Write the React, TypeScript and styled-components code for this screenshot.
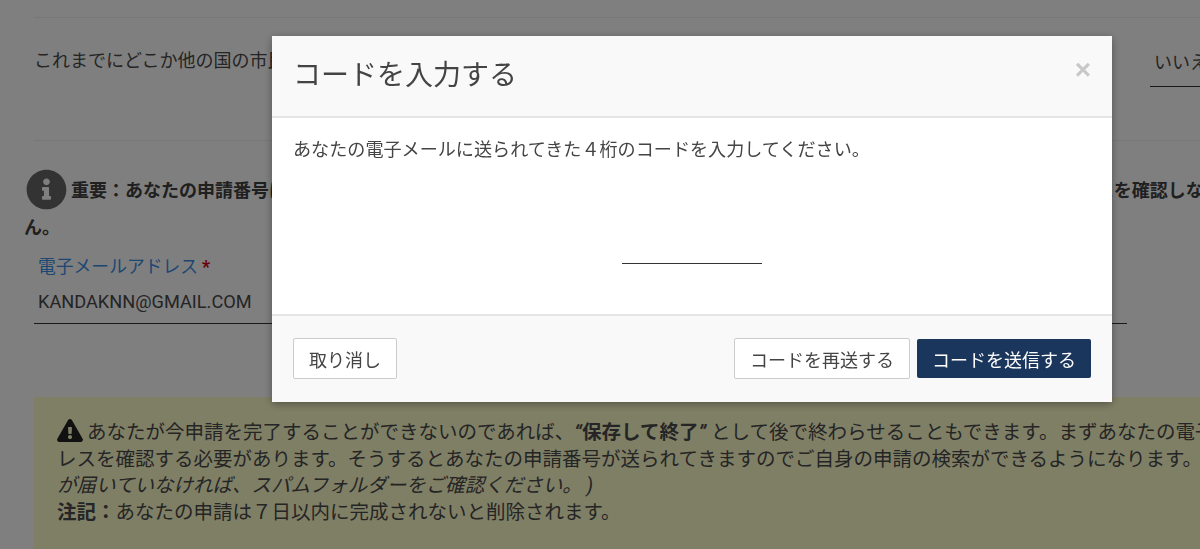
import { createGlobalStyle } from 'styled-components'
import styled from 'styled-components'
import { FaInfoCircle, FaExclamationTriangle } from 'react-icons/fa'

const GlobalStyle = createGlobalStyle`
html, body {
    margin: 0;
    height: 100%;
    overflow: hidden;
    background: #fff;
    font-family: Roboto, "Noto Sans CJK JP", sans-serif;
    color: #4a4a4a;
}
`;

const Page = styled.div`
width: 1500px;
height: 549px;
padding: 17px 0 0 34px;
box-sizing: border-box;
overflow: hidden;
`;

const Divider = styled.hr`
width: 1400px;
height: 1px;
margin: 0;
border: 0;
background: #eee;
`;

const QuestionRow = styled.div`
display: flex;
justify-content: space-between;
width: 1400px;
height: 122px;
box-sizing: border-box;
padding-top: 31px;
font-size: 18px;
line-height: 24px;
`;

const Select = styled.div`
width: 284px;
height: 38px;
box-sizing: border-box;
padding: 2px 0 0 4px;
border-bottom: 1px solid #333;
`;

const Question = styled.div``;

const Notice = styled.div`
width: 1500px;
margin: 28px 0 0 -10px;
font-size: 18px;
font-weight: 700;
line-height: 35px;
white-space: nowrap;
color: #404040;
`;

const InfoIcon = styled(FaInfoCircle)`
width: 41px;
height: 41px;
margin: 0 4px 0 2px;
vertical-align: -13px;
color: #666;
`;

const Field = styled.div`
width: 1093px;
margin-top: 9px;
border-bottom: 1px solid #333;
padding: 0 4px 9px;
box-sizing: border-box;
`;

const Label = styled.div`
font-size: 17.8px;
line-height: 26px;
color: #3a8ee6;
`;

const Required = styled.span`
color: #d0021b;
font-weight: 700;
margin-left: 4px;
`;

const Value = styled.div`
font-size: 18.2px;
line-height: 24px;
margin-top: 10px;
`;

const WarningBox = styled.div`
width: 1400px;
height: 200px;
margin-top: 73px;
padding: 22px 0 0 23px;
box-sizing: border-box;
background: #fffecc;
font-size: 19.5px;
line-height: 26.6px;
white-space: nowrap;
`;

const WarningIcon = styled(FaExclamationTriangle)`
width: 26px;
height: 23px;
margin-right: 4px;
vertical-align: -3px;
color: #222;
`;

const QuoteMark = styled.span`
font-style: italic;
`;

const Overlay = styled.div`
position: fixed;
inset: 0;
background: rgba(0, 0, 0, 0.5);
`;

const Modal = styled.div`
position: fixed;
left: 272px;
top: 36px;
width: 840px;
height: 366px;
display: flex;
flex-direction: column;
background: #fff;
box-shadow: 0 2px 8px rgba(0, 0, 0, 0.35);
`;

const ModalHeader = styled.div`
height: 82px;
flex: none;
box-sizing: border-box;
display: flex;
align-items: center;
justify-content: space-between;
padding: 0 21px 0 21px;
background: #f9f9f9;
border-bottom: 2px solid #e5e5e5;
`;

const ModalTitle = styled.h4`
margin: 0;
font-size: 28px;
font-weight: 400;
line-height: 36px;
color: #444;
`;

const CloseButton = styled.button`
border: 0;
padding: 0;
margin-top: -12px;
background: none;
font-family: "Liberation Sans", sans-serif;
font-size: 28px;
font-weight: 700;
line-height: 1;
color: #c8c8c8;
`;

const ModalBody = styled.div`
flex: 1;
padding: 19px 21px 0;
font-size: 18.1px;
line-height: 26px;
color: #444;
`;

const CodeInput = styled.div`
width: 140px;
height: 1px;
margin: 100px auto 0;
background: #333;
`;

const ModalFooter = styled.div`
height: 88px;
flex: none;
box-sizing: border-box;
display: flex;
align-items: center;
gap: 7px;
padding: 0 21px 1px;
background: #f9f9f9;
border-top: 2px solid #e5e5e5;
`;

const Button = styled.button<{ $primary?: boolean; $pushRight?: boolean }>`
height: ${(p) => (p.$primary ? '39px' : '41px')};
padding: 0 15px;
margin-left: ${(p) => (p.$pushRight ? 'auto' : '0')};
box-sizing: border-box;
border: ${(p) => (p.$primary ? '0' : '1px solid #ccc')};
border-radius: 2px;
background: ${(p) => (p.$primary ? '#1b365d' : '#fff')};
color: ${(p) => (p.$primary ? '#fff' : '#444')};
font-family: inherit;
font-size: 18px;
`;

const App = () => {
    return (
        <>
            <GlobalStyle />
            <Page>
                <Divider />
                <QuestionRow>
                    <Question>これまでにどこか他の国の市民権を取得したことがありますか？</Question>
                    <Select>いいえ</Select>
                </QuestionRow>
                <Divider />
                <Notice>
                    <InfoIcon />
                    重要：あなたの申請番号は電子メールで送信されますので、申請を続行する前に必ず先にこの画面であなたの電子メールアドレスを確認しなければなりませ<br />ん。
                </Notice>
                <Field>
                    <Label>電子メールアドレス<Required>*</Required></Label>
                    <Value>KANDAKNN@GMAIL.COM</Value>
                </Field>
                <WarningBox>
                    <WarningIcon />
                    あなたが今申請を完了することができないのであれば、<b><QuoteMark>“</QuoteMark>保存して終了<QuoteMark>”</QuoteMark></b> として後で終わらせることもできます。まずあなたの電子メールアド<br />
                    レスを確認する必要があります。そうするとあなたの申請番号が送られてきますのでご自身の申請の検索ができるようになります。(電子メール<br />
                    <i>が届いていなければ、スパムフォルダーをご確認ください。 )</i><br />
                    <b>注記：</b>あなたの申請は７日以内に完成されないと削除されます。
                </WarningBox>
            </Page>
            <Overlay />
            <Modal>
                <ModalHeader>
                    <ModalTitle>コードを入力する</ModalTitle>
                    <CloseButton>×</CloseButton>
                </ModalHeader>
                <ModalBody>
                    あなたの電子メールに送られてきた４桁のコードを入力してください。
                    <CodeInput />
                </ModalBody>
                <ModalFooter>
                    <Button>取り消し</Button>
                    <Button $pushRight>コードを再送する</Button>
                    <Button $primary>コードを送信する</Button>
                </ModalFooter>
            </Modal>
        </>
    )
}

export default App;
